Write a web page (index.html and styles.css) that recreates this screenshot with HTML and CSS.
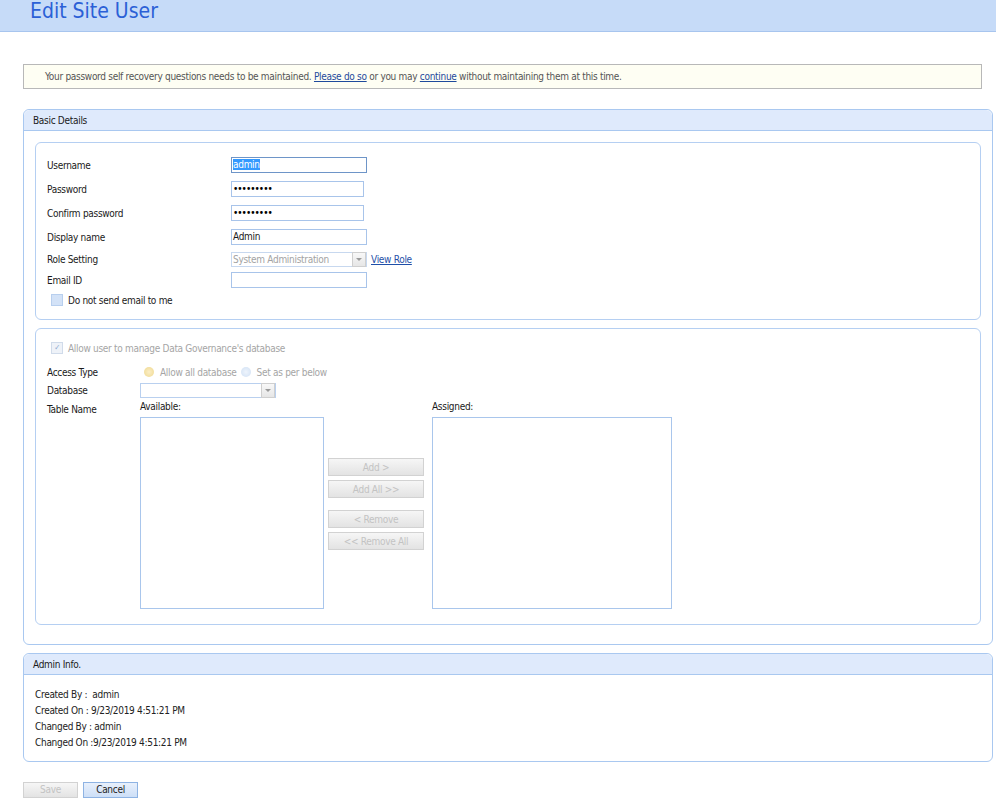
FILE: index.html
```html
<!DOCTYPE html>
<html lang="en">
<head>
  <meta charset="UTF-8">
  <title>Edit Site User</title>
  <link rel="stylesheet" href="styles.css">
</head>
<body>
<div class="page-header">
  <h1>Edit Site User</h1>
</div>

<div class="content">
  <div class="notice">
    Your password self recovery questions needs to be maintained. <a href="#">Please do so</a> or you may <a href="#">continue</a> without maintaining them at this time.
  </div>

  <div class="panel">
    <div class="panel-head">Basic Details</div>
    <div class="panel-body">
      <div class="group group-user">
        <div class="row r24"><label>Username</label><div class="field focus"><span class="sel">admin</span></div></div>
        <div class="row r24"><label>Password</label><div class="field short"><span class="dots">•••••••••</span></div></div>
        <div class="row r24"><label>Confirm password</label><div class="field short"><span class="dots">•••••••••</span></div></div>
        <div class="row r24"><label>Display name</label><div class="field">Admin</div></div>
        <div class="row r20">
          <label>Role Setting</label>
          <div class="select disabled"><span>System Administration</span><i class="arrow"></i></div>
          <a href="#" class="view-role">View Role</a>
        </div>
        <div class="row r22"><label>Email ID</label><div class="field"></div></div>
        <div class="row r18 check-row"><span class="check"></span>Do not send email to me</div>
      </div>

      <div class="group group-db">
        <div class="row r18 check-row muted"><span class="check checked">&#10003;</span>Allow user to manage Data Governance's database</div>
        <div class="row r18 access">
          <label class="short-label">Access Type</label>
          <span class="radio yellow"></span><span class="muted">Allow all database</span>
          <span class="radio blue"></span><span class="muted">Set as per below</span>
        </div>
        <div class="row r18"><label class="short-label">Database</label><div class="select"><span></span><i class="arrow"></i></div></div>
        <div class="tables">
          <label class="short-label table-label">Table Name</label>
          <div class="list-col available">
            <div class="list-title">Available:</div>
            <div class="listbox"></div>
          </div>
          <div class="move-buttons">
            <button disabled>Add &gt;</button>
            <button disabled>Add All &gt;&gt;</button>
            <button disabled class="gap">&lt; Remove</button>
            <button disabled>&lt;&lt; Remove All</button>
          </div>
          <div class="list-col assigned">
            <div class="list-title">Assigned:</div>
            <div class="listbox"></div>
          </div>
        </div>
      </div>
    </div>
  </div>

  <div class="panel admin">
    <div class="panel-head">Admin Info.</div>
    <div class="admin-body">
      <div>Created By :&nbsp; admin</div>
      <div>Created On :&nbsp;9/23/2019 4:51:21 PM</div>
      <div>Changed By : admin</div>
      <div>Changed On :9/23/2019 4:51:21 PM</div>
    </div>
  </div>

  <div class="actions">
    <button class="btn" disabled>Save</button>
    <button class="btn primary">Cancel</button>
  </div>
</div>
</body>
</html>
```

FILE: styles.css
```css
body {
  margin: 0;
  font-family: 'DejaVu Sans Condensed', 'DejaVu Sans', sans-serif;
  font-size: 10px;
  letter-spacing: -0.3px;
  color: #1a1a1a;
  background: #fff;
}

.page-header {
  height: 31px;
  background-color: #c6dbf8;
  border-bottom: 1px solid #a8c5ee;
  overflow: hidden;
}

.page-header h1 {
  margin: 0;
  padding-left: 30px;
  font-family: 'DejaVu Sans Condensed', 'DejaVu Sans', sans-serif;
  font-weight: normal;
  font-size: 21px;
  line-height: 22px;
  letter-spacing: 0;
  color: #2b60d6;
}

.content {
  padding: 32px 3px 0 23px;
}

.notice {
  margin-right: 11px;
  height: 23px;
  line-height: 23px;
  padding-left: 21px;
  background-color: #fefef3;
  border: 1px solid #b8b8b8;
  color: #555;
}

.notice a {
  color: #1f4a9c;
}

a {
  color: #1f4fa8;
}

.panel {
  margin-top: 20px;
  border: 1px solid #a9c8f0;
  border-radius: 6px;
  background: #fff;
}

.panel-head {
  height: 20px;
  line-height: 21px;
  padding-left: 9px;
  background-color: #dfeafc;
  border-bottom: 1px solid #a9c8f0;
  border-radius: 6px 6px 0 0;
}

.panel-body {
  padding: 11px 11px 19px 11px;
}

.group {
  border: 1px solid #b5cff2;
  border-radius: 6px;
  padding: 10px 11px;
}

.group-db {
  margin-top: 8px;
  padding-bottom: 15px;
}

.row {
  display: flex;
  align-items: center;
}

.r24 { height: 24px; }
.r22 { height: 22px; }
.r20 { height: 20px; }
.r18 { height: 18px; }

.row label {
  width: 184px;
  flex: none;
}

.field {
  width: 132px;
  height: 14px;
  line-height: 14px;
  border: 1px solid #a8c4ea;
  padding: 0 1px;
  background: #fff;
}

.field.short {
  width: 129px;
}

.field.focus {
  border-color: #6e95c8;
}

.sel {
  background-color: #3399ff;
  color: #fff;
}

.dots {
  font-size: 10px;
  letter-spacing: -1px;
  color: #000;
}

.select {
  position: relative;
  width: 133px;
  height: 13px;
  line-height: 13px;
  border: 1px solid #b9d0ef;
  background: #fff;
  padding-left: 1px;
}

.select.disabled {
  color: #a3a3a3;
  border-color: #c7d8ef;
}

.arrow {
  position: absolute;
  right: 0;
  top: -1px;
  width: 12px;
  height: 13px;
  border: 1px solid #cfcfcf;
  background: linear-gradient(#f8f8f8, #e6e6e6);
}

.arrow::after {
  content: "";
  position: absolute;
  left: 3px;
  top: 5px;
  border-left: 3px solid transparent;
  border-right: 3px solid transparent;
  border-top: 3px solid #9a9a9a;
}

.view-role {
  margin-left: 4px;
}

.check-row {
  padding-left: 4px;
}

.check {
  width: 10px;
  height: 10px;
  margin-right: 5px;
  border: 1px solid #b8cfee;
  background: #d3e2f7;
  font-size: 8px;
  line-height: 10px;
  text-align: center;
  color: #8aa6cf;
}

.check.checked {
  background: #eef2f8;
  border-color: #d0dbea;
}

.muted {
  color: #a5a5a5;
}

.short-label {
  width: 93px !important;
}

.access {
  margin-top: 6px;
}

.radio {
  width: 10px;
  height: 10px;
  border-radius: 50%;
  margin-right: 6px;
  margin-left: 4px;
}

.radio.yellow {
  background: radial-gradient(circle at 50% 50%, #fbeec6, #efd88f);
}

.radio.blue {
  background: radial-gradient(circle at 50% 50%, #eef4fc, #d0e0f4);
}

.tables {
  display: flex;
  margin-top: 1px;
}

.table-label {
  padding-top: 4px;
  flex: none;
}

.list-title {
  height: 17px;
  line-height: 14px;
}

.listbox {
  height: 190px;
  border: 1px solid #a9c6ec;
  background: #fff;
}

.available {
  width: 184px;
}

.assigned {
  width: 240px;
  margin-left: 8px;
}

.move-buttons {
  display: flex;
  flex-direction: column;
  gap: 4px;
  width: 96px;
  margin-left: 4px;
  padding-top: 58px;
}

.move-buttons button,
.btn {
  height: 18px;
  padding: 0;
  font-family: inherit;
  font-size: 10px;
  letter-spacing: -0.3px;
  color: #c3c3c3;
  border: 1px solid #d2d2d2;
  background: linear-gradient(#f6f6f6, #e3e3e3);
}

.move-buttons .gap {
  margin-top: 8px;
}

.admin {
  margin-top: 8px;
}

.admin-body {
  padding: 12px 11px 10px 11px;
  line-height: 16px;
  color: #222;
}

.actions {
  display: flex;
  gap: 5px;
  margin-top: 20px;
}

.btn {
  width: 55px;
  height: 16px;
  line-height: 14px;
}

.btn.primary {
  color: #222;
  border-color: #8eb3e3;
  background: linear-gradient(#e8f0fc, #cddff7);
}
```
